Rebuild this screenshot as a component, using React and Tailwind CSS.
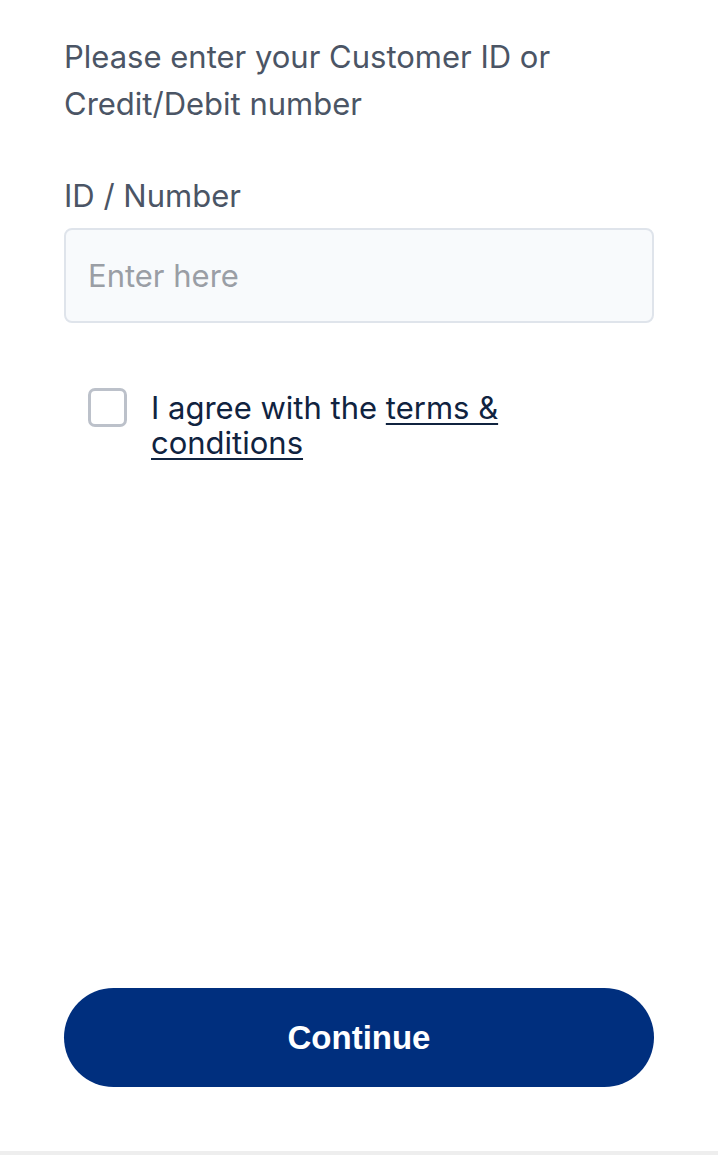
import React, { useState } from "react";

export default function App() {
  const [agreed, setAgreed] = useState(false);

  return (
    <div className="flex h-[1155px] w-full flex-col bg-white font-['Inter',sans-serif]">
      <main className="flex flex-1 flex-col px-[64px] pt-[33px]">
        {/* intro */}
        <p className="text-[31px] leading-[47px] text-[#4b5565]">
          Please enter your Customer ID or Credit/Debit number
        </p>

        {/* field */}
        <label className="mt-[49px] block text-[31px] leading-[40px] text-[#4b5565]">
          ID / Number
        </label>
        <input
          type="text"
          placeholder="Enter here"
          className="mt-[12px] h-[95px] w-full rounded-[8px] border-2 border-[#dfe4eb] bg-[#f8fafc] px-[22px] text-[31px] text-[#1f2937] outline-none placeholder:text-[#9a9ea5]"
        />

        {/* terms */}
        <div className="mt-[65px] flex items-start gap-[24px] pl-[24px]">
          <button
            type="button"
            onClick={() => setAgreed(!agreed)}
            className="h-[39px] w-[39px] shrink-0 rounded-[7px] border-[3px] border-[#bcc1ca] bg-white"
          ></button>
          <p className="mt-[2px] max-w-[370px] text-[31px] leading-[35px] text-[#10233f]">
            I agree with the <a href="#" className="underline underline-offset-4 decoration-2">terms &amp; conditions</a>
          </p>
        </div>

        {/* continue */}
        <div className="mt-auto pb-[64px]">
          <button
            type="button"
            className="h-[99px] w-full rounded-full bg-[#002f7e] font-['Liberation_Sans',sans-serif] text-[33px] font-bold text-white"
          >
            Continue
          </button>
        </div>
      </main>
      <div className="h-[4px] bg-[#eeeeee]"></div>
    </div>
  );
}
